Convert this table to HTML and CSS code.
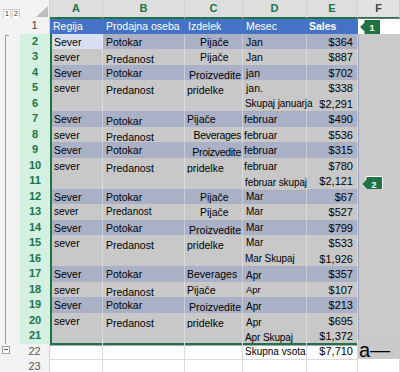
FILE: index.html
```html
<!DOCTYPE html>
<html>
<head>
<meta charset="utf-8">
<link rel="stylesheet" href="styles.css">
</head>
<body>
<div class="sheet">
  <div class="row hdr">
    <div class="ol"><span class="lvl">1</span><span class="lvl">2</span></div>
    <div class="corner"><span class="tri"></span></div>
    <div class="ch sel">A</div>
    <div class="ch sel">B</div>
    <div class="ch sel">C</div>
    <div class="ch sel">D</div>
    <div class="ch sel">E</div>
    <div class="ch">F</div>
  </div>

  <div class="row r1">
    <div class="ol"></div>
    <div class="rh">1</div>
    <div class="c t">Regija</div>
    <div class="c t">Prodajna oseba</div>
    <div class="c t">Izdelek</div>
    <div class="c t">Mesec</div>
    <div class="c t b">Sales</div>
    <div class="c f1"><svg class="badge" width="22" height="16" viewBox="0 0 22 16"><polygon points="0.5,8 5,3.5 5,0.5 21.5,0.5 21.5,15.5 5,15.5 5,12.5" fill="#217346" stroke="#fff" stroke-width="1"/><text x="13" y="11.5" fill="#fff" font-size="9" font-weight="bold" text-anchor="middle" font-family="Liberation Sans, sans-serif">1</text></svg></div>
  </div>

  <div class="row d bl">
    <div class="ol top"></div><div class="rh">2</div>
    <div class="c a act">Sever</div><div class="c">Potokar</div><div class="c pc">Pijače</div><div class="c">Jan</div><div class="c v big">$364</div><div class="c fx"></div>
  </div>
  <div class="row d gr">
    <div class="ol br"></div><div class="rh">3</div>
    <div class="c a">sever</div><div class="c lo">Predanost</div><div class="c pc">Pijače</div><div class="c">Jan</div><div class="c v big">$887</div><div class="c fx"></div>
  </div>
  <div class="row d bl">
    <div class="ol br"></div><div class="rh">4</div>
    <div class="c a">Sever</div><div class="c">Potokar</div><div class="c ra lo">Proizvedite</div><div class="c">jan</div><div class="c v big">$702</div><div class="c fx"></div>
  </div>
  <div class="row d gr">
    <div class="ol br"></div><div class="rh">5</div>
    <div class="c a">sever</div><div class="c lo">Predanost</div><div class="c pl lo">pridelke</div><div class="c">jan.</div><div class="c v big">$338</div><div class="c fx"></div>
  </div>
  <div class="row d gr">
    <div class="ol br"></div><div class="rh">6</div>
    <div class="c a"></div><div class="c"></div><div class="c"></div><div class="c ov">Skupaj januarja</div><div class="c v big">$2,291</div><div class="c fx"></div>
  </div>
  <div class="row d bl">
    <div class="ol br"></div><div class="rh">7</div>
    <div class="c a">Sever</div><div class="c lo">Potokar</div><div class="c pl">Pijače</div><div class="c ml">februar</div><div class="c v big">$490</div><div class="c fx"></div>
  </div>
  <div class="row d gr">
    <div class="ol br"></div><div class="rh">8</div>
    <div class="c a">sever</div><div class="c lo">Predanost</div><div class="c ra sq">Beverages</div><div class="c ml">februar</div><div class="c v big">$536</div><div class="c fx"></div>
  </div>
  <div class="row d bl">
    <div class="ol br"></div><div class="rh">9</div>
    <div class="c a">Sever</div><div class="c">Potokar</div><div class="c ra lo sq">Proizvedite</div><div class="c ml">februar</div><div class="c v big">$315</div><div class="c fx"></div>
  </div>
  <div class="row d gr">
    <div class="ol br"></div><div class="rh">10</div>
    <div class="c a">sever</div><div class="c lo">Predanost</div><div class="c pl lo">pridelke</div><div class="c ml">februar</div><div class="c v big">$780</div><div class="c fx"></div>
  </div>
  <div class="row d gr">
    <div class="ol br"></div><div class="rh">11</div>
    <div class="c a"></div><div class="c"></div><div class="c"></div><div class="c ov lo">februar skupaj</div><div class="c v big">$2,121</div><div class="c fx"><svg class="badge b2" width="22" height="16" viewBox="0 0 22 16"><polygon points="0.5,8 5,3.5 5,0.5 21.5,0.5 21.5,15.5 5,15.5 5,12.5" fill="#217346" stroke="#fff" stroke-width="1"/><text x="13" y="11.5" fill="#fff" font-size="9" font-weight="bold" text-anchor="middle" font-family="Liberation Sans, sans-serif">2</text></svg></div>
  </div>
  <div class="row d bl">
    <div class="ol br"></div><div class="rh">12</div>
    <div class="c a">Sever</div><div class="c">Potokar</div><div class="c pc">Pijače</div><div class="c sm">Mar</div><div class="c v big">$67</div><div class="c fx"></div>
  </div>
  <div class="row d gr">
    <div class="ol br"></div><div class="rh">13</div>
    <div class="c a sm">sever</div><div class="c sm">Predanost</div><div class="c pc">Pijače</div><div class="c sm">Mar</div><div class="c v big">$527</div><div class="c fx"></div>
  </div>
  <div class="row d bl">
    <div class="ol br"></div><div class="rh">14</div>
    <div class="c a">Sever</div><div class="c">Potokar</div><div class="c ra lo">Proizvedite</div><div class="c sm">Mar</div><div class="c v big">$799</div><div class="c fx"></div>
  </div>
  <div class="row d gr">
    <div class="ol br"></div><div class="rh">15</div>
    <div class="c a">sever</div><div class="c lo">Predanost</div><div class="c pl lo">pridelke</div><div class="c sm">Mar</div><div class="c v big">$533</div><div class="c fx"></div>
  </div>
  <div class="row d gr">
    <div class="ol br"></div><div class="rh">16</div>
    <div class="c a"></div><div class="c"></div><div class="c"></div><div class="c ov">Mar Skupaj</div><div class="c v big">$1,926</div><div class="c fx"></div>
  </div>
  <div class="row d bl">
    <div class="ol br"></div><div class="rh">17</div>
    <div class="c a">Sever</div><div class="c">Potokar</div><div class="c pl">Beverages</div><div class="c sm lo">Apr</div><div class="c v big">$357</div><div class="c fx"></div>
  </div>
  <div class="row d gr">
    <div class="ol br"></div><div class="rh">18</div>
    <div class="c a">sever</div><div class="c lo">Predanost</div><div class="c pl">Pijače</div><div class="c xs">Apr</div><div class="c v big">$107</div><div class="c fx"></div>
  </div>
  <div class="row d bl">
    <div class="ol br"></div><div class="rh">19</div>
    <div class="c a">Sever</div><div class="c">Potokar</div><div class="c ra lo">Proizvedite</div><div class="c sm lo">Apr</div><div class="c v big">$213</div><div class="c fx"></div>
  </div>
  <div class="row d gr">
    <div class="ol br"></div><div class="rh">20</div>
    <div class="c a">sever</div><div class="c lo">Predanost</div><div class="c pl lo">pridelke</div><div class="c sm lo">Apr</div><div class="c v big">$695</div><div class="c fx"></div>
  </div>
  <div class="row d gr last">
    <div class="ol br"></div><div class="rh">21</div>
    <div class="c a"></div><div class="c"></div><div class="c"></div><div class="c ov lo">Apr Skupaj</div><div class="c v big">$1,372</div><div class="c fx"></div>
  </div>

  <div class="row w">
    <div class="ol"><span class="minus"></span></div><div class="rh">22</div>
    <div class="c"></div><div class="c"></div><div class="c"></div><div class="c sm">Skupna vsota</div><div class="c v big">$7,710</div><div class="c fa">a—</div>
  </div>
  <div class="row w">
    <div class="ol"></div><div class="rh">23</div>
    <div class="c"></div><div class="c"></div><div class="c"></div><div class="c"></div><div class="c"></div><div class="c"></div>
  </div>
</div>
</body>
</html>
```

FILE: styles.css
```css
html, body {
  margin: 0;
  padding: 0;
  background: #fff;
  overflow: hidden;
}
.sheet {
  width: 400px;
  height: 372px;
  font-family: "Liberation Sans", Arial, sans-serif;
  font-size: 10.5px;
  color: #000;
  overflow: hidden;
}
.row {
  display: grid;
  grid-template-columns: 20px 30px 53px 82px 58px 64px 51px 42px;
  height: 15.5px;
}
.row > div {
  box-sizing: border-box;
  overflow: visible;
  white-space: nowrap;
  position: relative;
}

/* header row */
.hdr { height: 18px; background: #f3f3f3; }
.hdr .ol { display: flex; align-items: flex-end; gap: 1px; padding: 0 0 0 3px; }
.lvl {
  width: 7px; height: 8px;
  margin-bottom: -1px;
  font-size: 7px; line-height: 8px;
  color: #333; text-align: center;
  background: #fff;
  border: 1px solid #d0d0d0;
  transform: translateY(-1px);
}
.corner { background: #f3f3f3; border-right: 1px solid #d4d4d4; }
.tri {
  position: absolute;
  right: 1px; bottom: 2px;
  width: 0; height: 0;
  border-left: 12px solid transparent;
  border-bottom: 11px solid #bdbdbd;
}
.ch {
  background: #e1e1e1;
  border-right: 1px solid #cfcfcf;
  border-bottom: 2px solid #217346;
  text-align: center;
  font-size: 11px;
  font-weight: bold;
  line-height: 17px;
  color: #444;
}
.ch.sel { color: #217346; background: #dedede; }

/* outline column */
.ol { background: #f3f3f3; }
.ol.top::before {
  content: ""; position: absolute;
  left: 5px; top: 1px; bottom: 0;
  border-left: 1px solid #9a9a9a;
  border-top: 1px solid #9a9a9a;
  width: 3px;
}
.ol.br::before {
  content: ""; position: absolute;
  left: 5px; top: 0; bottom: 0;
  border-left: 1px solid #9a9a9a;
}
.minus {
  position: absolute;
  left: 2px; top: 2px;
  width: 8px; height: 8px;
  box-sizing: border-box;
  border: 1px solid #a0a0a0;
  background: #fff;
}
.minus::after {
  content: ""; position: absolute;
  left: 1px; right: 1px; top: 2px;
  border-top: 1px solid #555;
}

/* row headers */
.rh {
  background: #f3f3f3;
  color: #555;
  text-align: center;
  font-size: 11px;
  line-height: 15.5px;
  border-bottom: 1px solid #e2e2e2;
  border-right: 1px solid #d4d4d4;
}
.d .rh {
  background: #d3f0e0;
  color: #217346;
  font-weight: bold;
  border-bottom: 1px solid #c3e3d0;
  border-right: none;
}
.r1 .rh { color: #444; }

/* cells */
.c {
  line-height: 14px;
  padding-left: 3px;
}
.r1 { background: #fff; }
.r1 .c.t {
  background: #4472c4;
  color: #fff;
  margin-top: 1px;
  height: 14.5px;
  line-height: 15px;
}
.r1 .c.b { font-weight: bold; padding-left: 2px; }
.f1 { background: #fff; border-top: 1px solid #777; }

.d .c {
  border-right: 1px solid rgba(255,255,255,0.35);
  border-bottom: 1px solid rgba(110,120,150,0.35);
  padding-top: 1px;
}
.bl .c { background: #aab1c7; }
.gr .c { background: #c8c8c8; }
.d .c.fx { background: #cacaca; border-right: none; border-bottom: none; border-left: 1px solid #9aa4c0; }
.d .c.a { box-shadow: inset 2px 0 #217346; padding-left: 4px; }
.d .c.act { background: #d9dff1; }
.last .c { box-shadow: inset 0 -2px #217346; }
.last .c.a { box-shadow: inset 2px 0 #217346, inset 0 -2px #217346; }
.last .c.fx { box-shadow: none; }

.c.lo { padding-top: 3px; }
.c.pc { padding-left: 15px; }
.c.pl { padding-left: 2px; }
.c.ra { text-align: right; padding-left: 0; padding-right: 1px; }
.c.sq { letter-spacing: -0.3px; }
.c.ml { padding-left: 1px; }
.c.ov { padding-left: 2px; z-index: 2; font-size: 10px; letter-spacing: -0.1px; }
.c.sm { font-size: 10px; }
.c.xs { font-size: 9.5px; }
.c.v { text-align: right; padding-right: 4px; padding-left: 0; }
.c.big { font-size: 11px; }

/* white rows */
.w .c {
  border-right: 1px solid #dadada;
  border-bottom: 1px solid #dadada;
  line-height: 15px;
}
.w .c.sm { padding-left: 2px; }
.c.fa {
  background: #c9c9c9;
  font-size: 20px;
  line-height: 16px;
  padding-left: 1px;
  border: none;
  margin-top: -4px;
  height: 19.5px;
  padding-top: 2px;
}

.badge { position: absolute; left: 1px; top: 0; }
.b2 { top: 3px; left: 2px; }
```
